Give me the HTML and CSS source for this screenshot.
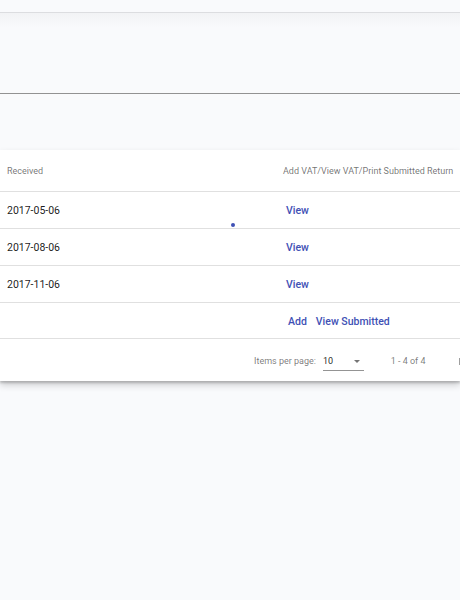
FILE: index.html
```html
<!DOCTYPE html>
<html lang="en">
<head>
<meta charset="utf-8">
<title>VAT Returns</title>
<link rel="stylesheet" href="styles.css">
</head>
<body>
<div class="page">
  <div class="top-bar"></div>
  <div class="top-shadow"></div>
  <div class="field-area"></div>
  <div class="spacer"></div>
  <div class="card">
    <div class="row header-row">
      <div class="cell">Received</div>
      <div class="cell">Add VAT/View VAT/Print Submitted Return</div>
    </div>
    <div class="row data-row">
      <div class="cell">2017-05-06</div>
      <div class="cell actions"><a class="link">View</a></div>
    </div>
    <div class="row data-row">
      <div class="cell">2017-08-06</div>
      <div class="cell actions"><a class="link">View</a></div>
    </div>
    <div class="row data-row">
      <div class="cell">2017-11-06</div>
      <div class="cell actions"><a class="link">View</a></div>
    </div>
    <div class="row data-row last">
      <div class="cell"></div>
      <div class="cell actions multi"><a class="link">Add</a><a class="link">View Submitted</a></div>
    </div>
    <div class="paginator">
      <span class="label">Items per page:</span>
      <div class="select">
        <span class="value">10</span>
        <span class="arrow"></span>
      </div>
      <span class="range">1 - 4 of 4</span>
      <span class="nav-first"></span>
    </div>
    <span class="dot"></span>
  </div>
</div>
</body>
</html>
```

FILE: styles.css
```css
html, body {
  margin: 0;
  padding: 0;
  overflow: hidden;
}
body {
  background: #f9fafc;
  font-family: Roboto, "Liberation Sans", Arial, sans-serif;
  color: rgba(0, 0, 0, 0.87);
}
.page {
  width: 460px;
  height: 600px;
}
.top-bar {
  height: 12px;
  border-bottom: 1px solid #dcdde0;
}
.top-shadow {
  height: 15px;
  background: linear-gradient(to bottom, #f2f3f5, #f9fafc);
}
.field-area {
  height: 65px;
  border-bottom: 1px solid #929292;
}
.spacer {
  height: 56px;
}
.card {
  position: relative;
  background: #ffffff;
  box-shadow: 0 2px 2px rgba(0, 0, 0, 0.18), 0 4px 7px rgba(0, 0, 0, 0.18);
}
.row {
  display: grid;
  grid-template-columns: 276px 1fr;
  align-items: center;
  padding-left: 7px;
  border-bottom: 1px solid #e0e0e0;
  box-sizing: content-box;
}
.header-row {
  height: 40px;
  padding-top: 1px;
  font-size: 9px;
  font-weight: 400;
  color: rgba(0, 0, 0, 0.56);
}
.data-row {
  height: 35px;
  padding-top: 1px;
  font-size: 10.5px;
  color: rgba(0, 0, 0, 0.9);
}
.data-row.last {
  height: 34px;
}
.cell {
  white-space: nowrap;
}
.actions {
  padding-left: 3px;
}
.actions.multi {
  padding-left: 5px;
  display: flex;
  gap: 9px;
}
.link {
  color: #3f51b5;
  font-weight: 500;
  font-size: 10.5px;
  cursor: pointer;
}
.paginator {
  height: 40px;
  padding-top: 2px;
  display: flex;
  align-items: center;
  padding-left: 254px;
  font-size: 9px;
  color: rgba(0, 0, 0, 0.54);
  white-space: nowrap;
}
.select {
  margin-left: 7px;
  width: 42px;
  height: 14px;
  display: flex;
  align-items: flex-start;
  justify-content: space-between;
  border-bottom: 1px solid rgba(0, 0, 0, 0.42);
  color: rgba(0, 0, 0, 0.87);
  margin-top: 4px;
}
.select .value {
  font-size: 9px;
}
.arrow {
  align-self: center;
  width: 0;
  height: 0;
  border-left: 3.5px solid transparent;
  border-right: 3.5px solid transparent;
  border-top: 3.5px solid rgba(0, 0, 0, 0.54);
  margin-right: 4px;
  margin-top: -3px;
}
.range {
  margin-left: 27px;
}
.nav-first {
  margin-left: 33px;
  width: 1.5px;
  height: 7px;
  background: rgba(0, 0, 0, 0.38);
}
.dot {
  position: absolute;
  left: 231px;
  top: 73px;
  width: 4px;
  height: 4px;
  border-radius: 50%;
  background: #3f51b5;
}
```
